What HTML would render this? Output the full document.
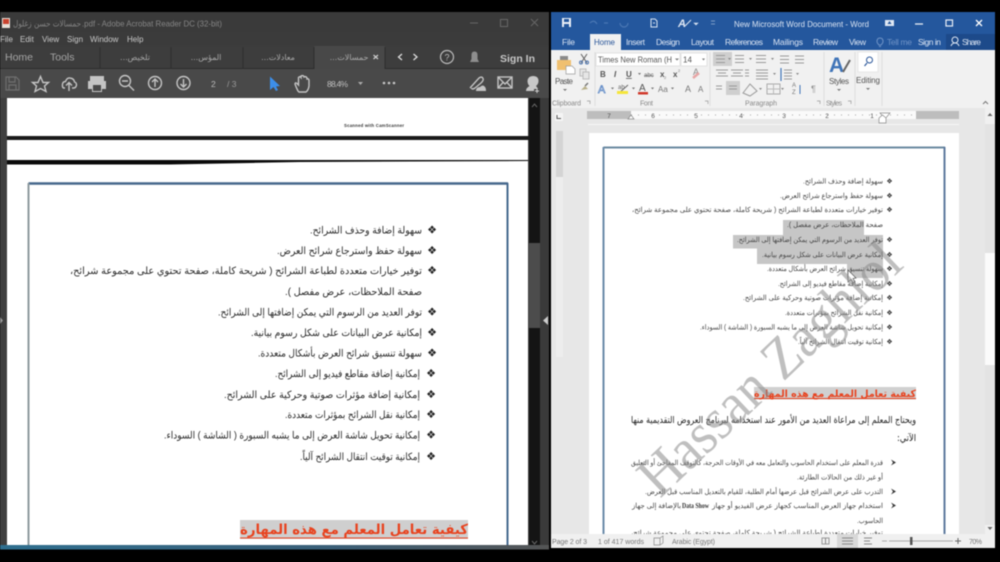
<!DOCTYPE html>
<html lang="en"><head><meta charset="utf-8"><title>Screen</title>
<style>
html,body{margin:0;padding:0;background:#000;width:1000px;height:562px;overflow:hidden}
svg{display:block;filter:blur(.55px)}
text{font-family:"Liberation Sans",sans-serif}
.ar{font-family:"DejaVu Sans","Liberation Sans",sans-serif;direction:rtl;text-anchor:start;fill:#2a2a2a;font-size:10px}
.ars{font-size:7px;fill:#444}
.dj{font-family:"DejaVu Sans",sans-serif}
.tab{font-family:"DejaVu Sans",sans-serif;direction:rtl;text-anchor:middle;font-size:8px;fill:#a8a8a8}
.ic{fill:none;stroke:#c4c4c4;stroke-width:1.4}
.mn{font-size:8px;fill:#c8c8c8}
.tb{font-size:8.5px;fill:#d9e3f2}
.rb{font-size:8px;fill:#555}
.gl{font-size:7px;fill:#8a8a8a}
</style></head><body>
<svg width="1000" height="562" viewBox="0 0 1000 562" xmlns="http://www.w3.org/2000/svg">
<rect width="1000" height="562" fill="#000"/>

<!-- LEFT: Acrobat chrome -->
<rect x="0" y="12" width="549" height="20" fill="#3a3a3a"/>
<rect x="0" y="32" width="549" height="14" fill="#3b3b3b"/>
<rect x="0" y="46" width="549" height="23" fill="#3d3d3d"/>
<rect x="314" y="46" width="71" height="23" fill="#484848"/>
<rect x="0" y="69" width="549" height="30" fill="#494949"/>
<rect x="0" y="68" width="314" height="1" fill="#2c2c2c"/><rect x="385" y="68" width="164" height="1" fill="#2c2c2c"/>
<path d="M100 47V69M171 47V69M243 47V69M314 47V69M385 47V69" stroke="#2e2e2e"/>
<rect x="2" y="18" width="8" height="10" fill="#e9e0d8"/><rect x="3" y="19" width="6" height="5" fill="#c9432f"/>
<text class="ar" x="81" y="26.500" textLength="68" lengthAdjust="spacingAndGlyphs" style="font-size:8.500px;fill:#858585">حمسالات حسن زغلول</text>
<text x="82" y="26.500" font-size="8.500" fill="#858585" textLength="140" lengthAdjust="spacingAndGlyphs">.pdf - Adobe Acrobat Reader DC (32-bit)</text>
<path d="M470 23H478" stroke="#666"/><rect x="500.500" y="19.500" width="7" height="7" fill="none" stroke="#666"/><path d="M531 19L538 26M538 19L531 26" stroke="#666"/>
<g class="mn"><text x="0" y="42">File</text><text x="20" y="42">Edit</text><text x="42" y="42">View</text><text x="67" y="42">Sign</text><text x="90" y="42">Window</text><text x="127" y="42">Help</text></g>
<text x="5" y="60.500" font-size="10.500" fill="#a5a5a5">Home</text><text x="50" y="60.500" font-size="10.500" fill="#a5a5a5">Tools</text>
<text class="tab" x="135" y="60">تلخيص...</text><text class="tab" x="206" y="60">المؤس...</text><text class="tab" x="278" y="60">معادلات...</text><text class="tab" x="349" y="60">حمسالات...</text>
<g transform="translate(0,-3)">
<path d="M373.500 58L378 62M378 58L373.500 62" stroke="#ccc" stroke-width="1.200"/>
<path d="M402 57L398.500 60L402 63M413.500 57L417 60L413.500 63" fill="none" stroke="#ddd" stroke-width="1.300"/>
<circle cx="447" cy="60" r="6.500" fill="none" stroke="#bbb" stroke-width="1.200"/><text x="447" y="63.500" font-size="9" fill="#bbb" text-anchor="middle">?</text>
<path d="M470 65H479L477.500 62V58Q477.500 54.500 474.500 54.500Q471.500 54.500 471.500 58V62Z" fill="#8e8e8e"/>
<text x="500" y="65" font-size="10.500" font-weight="bold" fill="#c6c6c6" textLength="35">Sign In</text>
</g>

<!-- toolbar icons -->
<g transform="translate(0,-4)">
<g fill="none" stroke="#6f6f6f" stroke-width="1.200"><path d="M6 81H16L19 84V94H6Z M9 81V86H15V81M9 94V89H16V94"/></g>
<path class="ic" d="M40.500 80.500L43 86.500H48.500L44.500 90L46 95.500L40.500 92.500L35 95.500L36.500 90L32.500 86.500H38Z"/>
<path class="ic" d="M65 92H64Q62 92 62.500 88Q63 85.500 65.500 85.500Q67 81.500 70 82Q74 82.500 74.500 86Q76.500 86.500 76.500 89Q76 92 73.500 92H72M69 95V87M66 89.500L69 86.500L72 89.500"/>
<path d="M90 85V80H104V85H106V93H102V96H92V93H88V85Z M93 89H101V95H93Z" fill="#c4c4c4" fill-rule="evenodd"/>
<circle cx="125" cy="85" r="5.500" class="ic"/><path class="ic" d="M129 89.500L134 94.500M122 85H128"/>
<circle cx="155" cy="87" r="6.500" class="ic"/><path class="ic" d="M155 91V83.500M152 86L155 83L158 86"/>
<circle cx="183.500" cy="87" r="6.500" class="ic"/><path class="ic" d="M183.500 83V90.500M180.500 88L183.500 91L186.500 88"/>
<text x="211" y="91" font-size="8.500" fill="#bbb">2</text><text x="227" y="91" font-size="8.500" fill="#999">/ 3</text>
<path d="M270 80.500L270 94L273.500 91L276 95L278 94L276 90.500L280 90Z" fill="#3d8ee8"/>
<path class="ic" d="M298 95Q296 91 295 88Q295 86 297 87.500L298.500 89V81.500Q300 80 301 81.500V80Q303 79 304 80.500V81Q306 80 307 82V83Q308.500 82.500 309 84V90Q308.500 94 306 96H299Z"/>
<text x="327" y="91" font-size="8.500" fill="#bfbfbf" textLength="21">88.4%</text>
<path d="M358 86H363L360.500 89Z" fill="#aaa"/>
<g fill="#c6c6c6"><circle cx="384" cy="87" r="1.300"/><circle cx="389" cy="87" r="1.300"/><circle cx="394" cy="87" r="1.300"/></g>
<path class="ic" d="M470 92L479 82Q482 80 483 82.500Q484 84 481 87L475 92Q472 94 471.500 92"/><path d="M476 95Q476 91 480 91Q483 88 485 91Q486 92 486 95Z" fill="#c4c4c4"/>
<rect x="498" y="81" width="14" height="11" class="ic"/><path class="ic" d="M498 81L505 88L512 81M498 92L503 86.500M512 92L507 86.500"/>
<path d="M533 80Q528 80 527.500 85Q527.500 88 529.500 90Q526 92 526 95H534V93H538Q537 91 536 90Q538.500 88 538.500 85Q538.500 80 533 80Z" fill="#c8c8c8"/><path d="M537 93V97M535 95H539" stroke="#ccc"/>
</g>

<!-- LEFT: document area -->
<rect x="0" y="98" width="530" height="448" fill="#3f3f3f"/>
<rect x="529" y="98" width="11" height="448" fill="#141414"/>
<rect x="540" y="98" width="9" height="448" fill="#3a3a3a"/>
<rect x="529" y="243" width="11" height="85" fill="#4c4c4c"/>
<path d="M532 107L534.500 104L537 107M532 541L534.500 544L537 541" fill="none" stroke="#666"/>
<path d="M548 316L543 320.500L548 325Z" fill="#ccc"/>
<path d="M0 317L3 320.500L0 324Z" fill="#999"/>
<rect x="7" y="98" width="521" height="38" fill="#fff"/>
<rect x="7" y="136" width="523" height="4" fill="#1a1a1a"/>
<rect x="7" y="140" width="521" height="20" fill="#fff"/>
<rect x="7" y="160" width="521" height="385" fill="#fff"/>
<path d="M7 160H528V161L300 162L170 164.500H7Z" fill="#0a0a0a"/>
<text x="344" y="127" font-size="4.300" font-weight="bold" fill="#333" textLength="60">Scanned with CamScanner</text>
<!-- frame -->
<path d="M28.500 183.500H508" stroke="#46688c" stroke-width="2.500"/>
<path d="M28.500 183V545" stroke="#8e9a9e" stroke-width="2"/>
<path d="M507.500 183V545" stroke="#44688e" stroke-width="2"/>

<g class="ar">
<text x="422" y="233.500" textLength="112" lengthAdjust="spacingAndGlyphs">سهولة إضافة وحذف الشرائح.</text>
<text x="422" y="254" textLength="145" lengthAdjust="spacingAndGlyphs">سهولة حفظ واسترجاع شرائح العرض.</text>
<text x="422" y="274" textLength="352" lengthAdjust="spacingAndGlyphs">توفير خيارات متعددة لطباعة الشرائح ( شريحة كاملة، صفحة تحتوي على مجموعة شرائح،</text>
<text x="422" y="295" textLength="137" lengthAdjust="spacingAndGlyphs">صفحة الملاحظات، عرض مفصل ).</text>
<text x="422" y="315.500" textLength="204" lengthAdjust="spacingAndGlyphs">توفر العديد من الرسوم التي يمكن إضافتها إلى الشرائح.</text>
<text x="422" y="336" textLength="171" lengthAdjust="spacingAndGlyphs">إمكانية عرض البيانات على شكل رسوم بيانية.</text>
<text x="422" y="356.500" textLength="164" lengthAdjust="spacingAndGlyphs">سهولة تنسيق شرائح العرض بأشكال متعددة.</text>
<text x="420" y="377" textLength="145" lengthAdjust="spacingAndGlyphs">إمكانية إضافة مقاطع فيديو إلى الشرائح.</text>
<text x="420" y="398" textLength="196" lengthAdjust="spacingAndGlyphs">إمكانية إضافة مؤثرات صوتية وحركية على الشرائح.</text>
<text x="420" y="418" textLength="135" lengthAdjust="spacingAndGlyphs">إمكانية نقل الشرائح بمؤثرات متعددة.</text>
<text x="420" y="438.500" textLength="256" lengthAdjust="spacingAndGlyphs">إمكانية تحويل شاشة العرض إلى ما يشبه السبورة ( الشاشة ) السوداء.</text>
<text x="420" y="460" textLength="120" lengthAdjust="spacingAndGlyphs">إمكانية توقيت انتقال الشرائح آلياً.</text>
</g>
<g class="dj" font-size="11" fill="#222" text-anchor="middle">
<text class="dj" x="432" y="233.500">❖</text><text class="dj" x="432" y="254">❖</text><text class="dj" x="432" y="274">❖</text><text class="dj" x="432" y="315.500">❖</text><text class="dj" x="432" y="336">❖</text><text class="dj" x="432" y="356.500">❖</text><text class="dj" x="431" y="377">❖</text><text class="dj" x="431" y="398">❖</text><text class="dj" x="431" y="418">❖</text><text class="dj" x="431" y="438.500">❖</text><text class="dj" x="431" y="460">❖</text></g>
<rect x="240" y="520" width="228" height="19" fill="#cfcfcf"/>
<text class="ar" x="468" y="534" textLength="228" lengthAdjust="spacingAndGlyphs" style="fill:#e8431f;font-size:14px;font-weight:bold">كيفية تعامل المعلم مع هذه المهارة</text>
<rect x="240" y="537.500" width="228" height="1" fill="#e8431f"/>
<defs><linearGradient id="bl" x1="0" x2="1"><stop offset="0" stop-color="#2f6f8f"/><stop offset=".6" stop-color="#3a5f78"/><stop offset="1" stop-color="#555"/></linearGradient></defs>
<rect x="0" y="545" width="549" height="4.500" fill="url(#bl)"/>

<!-- RIGHT: Word chrome -->
<rect x="551" y="12" width="444" height="38" fill="#24579d"/>
<rect x="946" y="34" width="49" height="16" fill="#1d4a8a"/>
<path d="M562 18H571V27H562Z" fill="#e8eef6"/><rect x="564" y="19" width="5" height="3" fill="#24579d"/><rect x="564" y="24" width="5" height="3" fill="#24579d"/>
<path d="M590 23Q594 19 597 24M604 23H608M620 23A4 4 0 1 0 628 23" fill="none" stroke="#4a77b4" stroke-width="1.200"/>
<path d="M651 19H655L657 21V27H651Z M653 23H655" fill="none" stroke="#d8e3f2"/>
<text x="678" y="27" font-size="11" font-weight="bold" font-style="italic" fill="#e0e8f4">A</text><path d="M685 26L691 20" stroke="#e0e8f4"/>
<path d="M694 23H698L696 25Z M711 21H715M711 24H715" fill="#d8e3f2" stroke="#d8e3f2" stroke-width=".6"/>
<text x="734" y="27" class="tb" textLength="135" lengthAdjust="spacingAndGlyphs">New Microsoft Word Document - Word</text>
<rect x="885" y="20" width="9" height="6" fill="#e0e8f4"/><path d="M889.500 21L887.500 24H891.500Z" fill="#24579d"/>
<path d="M915 24H923" stroke="#e8eef6" stroke-width="1.300"/><rect x="946" y="20" width="6.500" height="6" fill="none" stroke="#e8eef6" stroke-width="1.200"/><path d="M976 20L982 26M982 20L976 26" stroke="#fff" stroke-width="1.300"/>
<rect x="590" y="34" width="31" height="16" fill="#f1f1f1"/>
<g class="tb" font-size="8"><text x="562" y="45" textLength="13">File</text></g>
<text x="594" y="45" font-size="8" fill="#2b579a" textLength="21">Home</text>
<g class="tb"><text x="626" y="45" textLength="19">Insert</text><text x="656" y="45" textLength="24">Design</text><text x="691" y="45" textLength="23">Layout</text><text x="725" y="45" textLength="38">References</text><text x="773" y="45" textLength="30">Mailings</text><text x="813" y="45" textLength="25">Review</text><text x="849" y="45" textLength="17">View</text><text x="887" y="45" textLength="25" style="fill:#6f93c6">Tell me</text><text x="918" y="45" textLength="23">Sign in</text><text x="962" y="45" textLength="19">Share</text></g>
<path d="M880 38Q877 38 877 41.500Q877 43 879 45H881Q883 43 883 41.500Q883 38 880 38Z M879 46.500H881" fill="none" stroke="#6f93c6"/>
<circle cx="955" cy="40" r="3" fill="none" stroke="#e0e8f4"/><path d="M951 46Q952 43 955 43Q958 43 959 46" fill="none" stroke="#e0e8f4"/>

<!-- ribbon -->
<rect x="551" y="50" width="444" height="58" fill="#f1f1f1"/>
<rect x="551" y="108" width="444" height="426" fill="#e7e7e7"/>
<path d="M595 52V106M710 52V106M824 52V106M855 52V106M882 52V106" stroke="#dcdcdc"/>
<path d="M557 60H571V73H567V70H557Z" fill="#f0c070"/><rect x="560" y="56" width="8" height="4" fill="#8a8a8a"/><path d="M566 66H572L575 69V74H566Z" fill="#fff" stroke="#9a9a9a" stroke-width=".7"/>
<text x="555" y="84" class="rb" textLength="18">Paste</text><path d="M563 89H567L565 91Z" fill="#777"/>
<path d="M581 54L587 63M587 54L581 63" stroke="#666" stroke-width="1.100"/><circle cx="581" cy="62.500" r="1.500" fill="none" stroke="#4f76b0"/><circle cx="587" cy="62.500" r="1.500" fill="none" stroke="#4f76b0"/>
<rect x="580" y="69" width="6" height="7" fill="#e6e6e6" stroke="#bbb"/><rect x="583" y="72" width="6" height="7" fill="#e6e6e6" stroke="#bbb"/>
<path d="M581 90L585 86L588 89Z" fill="#b8b08a"/><path d="M585 86L588 83" stroke="#777" stroke-width="1.500"/>
<rect x="596" y="53" width="84" height="13" fill="#fff" stroke="#e2e2e2"/><rect x="681" y="53" width="26" height="13" fill="#fff" stroke="#e2e2e2"/>
<text x="598" y="62.500" font-size="8" fill="#555" textLength="74" lengthAdjust="spacingAndGlyphs">Times New Roman (H</text><path d="M675 58.500H679L677 60.500Z M702 58.500H705L703.500 60.500Z" fill="#777"/>
<text x="683" y="62.500" font-size="8" fill="#555">14</text>
<text x="600" y="77" font-size="8" font-weight="bold" fill="#555">B</text><text x="614" y="77" font-size="8" font-style="italic" font-weight="bold" fill="#555">I</text><text x="626" y="77" font-size="8" font-weight="bold" fill="#555" text-decoration="underline">U</text>
<path d="M638 73H641L639.500 75Z" fill="#777"/>
<text x="644" y="77" font-size="6" fill="#666" text-decoration="line-through">abc</text>
<text x="660" y="77" font-size="8" font-weight="bold" fill="#555">x</text><text x="664" y="79" font-size="4" fill="#777">2</text>
<text x="673" y="77" font-size="8" font-weight="bold" fill="#555">x</text><text x="678" y="72" font-size="4" fill="#777">2</text>
<text x="693" y="75" font-size="9" fill="#888">A</text><path d="M693 78L699 73" stroke="#e7a6a6" stroke-width="2.500"/>
<text x="598" y="93" font-size="11" fill="#fff" stroke="#5b86c4" stroke-width=".7">A</text><path d="M611 87.500H614L612.500 89.500Z" fill="#777"/>
<text x="618" y="89" font-size="6" fill="#666">ab</text><path d="M619 93L628 85" stroke="#666"/><rect x="617" y="91" width="11" height="3" fill="#f5e63a"/><path d="M632 87.500H635L633.500 89.500Z" fill="#777"/>
<text x="639" y="91" font-size="10" fill="#555">A</text><rect x="638" y="92" width="10" height="2.500" fill="#d0392b"/><path d="M651 87.500H654L652.500 89.500Z" fill="#777"/>
<text x="658" y="92" font-size="8" fill="#777">Aa</text><path d="M671 87.500H674L672.500 89.500Z" fill="#777"/>
<text x="685" y="92" font-size="9" fill="#777">A</text><text x="698" y="92" font-size="8" fill="#777">A</text>
<rect x="713" y="52" width="19" height="14" fill="#cfcfcf"/>
<rect x="726" y="81" width="14" height="14" fill="#cfcfcf"/>
<g stroke="#9a9a9a" fill="none">
<path d="M716 55.500H725M716 59H725M716 62.500H725M735 55.500H744M735 59H744M735 62.500H744M756 55.500H766M756 59H766M756 62.500H766M780 56H789M780 59.500H789M780 63H789M795 56H804M795 59.500H804M795 63H804"/>
<path d="M716 70H728M718 73H726M716 76H728M731 70H743M733 73H741M731 76H743M745 70H749M745 73H749M745 76H749M756 70H768M756 73H768M756 76H768M756 79H768M784 70H792M784 73H792M784 76H792M784 79H792"/>
<path d="M716 86H722M716 89H722M729 86H737M729 89H737"/>
</g>
<path d="M781 68V81" stroke="#3f74b8" stroke-width="1.200"/>
<path d="M743 93L750 84L757 91L750 96Z" fill="none" stroke="#9a9a9a"/>
<rect x="767" y="84" width="13" height="10" fill="none" stroke="#aaa"/><path d="M767 89H780M773.500 84V94" stroke="#bbb"/>
<text x="792" y="87" font-size="6" fill="#777">A</text><text x="792" y="94" font-size="6" fill="#777">Z</text><path d="M800 85V94" stroke="#3f74b8"/>
<text x="811" y="92" font-size="9" fill="#999">¶</text>
<path d="M728 58H731L729.500 60Z M749 58H752L750.500 60Z M771 58H774L772.500 60Z M773 73H776L774.500 75Z M796 73H799L797.500 75Z M759 88H762L760.500 90Z M781 88H784L782.500 90Z" fill="#888"/>
<text x="829" y="72" font-size="21" font-weight="bold" fill="#3f74b8">A</text><path d="M843 72L850 60" stroke="#666" stroke-width="2"/>
<text x="829" y="84" class="rb" textLength="20">Styles</text><path d="M837 89H841L839 91Z" fill="#777"/>
<rect x="858" y="52" width="20" height="20" fill="#fff" stroke="#e7e7e7"/><circle cx="869.500" cy="60" r="3" fill="none" stroke="#2b579a"/><path d="M867 63L864.500 66" stroke="#2b579a" stroke-width="1.200"/>
<text x="856" y="83" class="rb" textLength="24">Editing</text><path d="M866 88H870L868 90Z" fill="#777"/>
<g class="gl"><text x="552" y="105.500" textLength="29">Clipboard</text><text x="640" y="105.500" textLength="13">Font</text><text x="745" y="105.500" textLength="32">Paragraph</text><text x="826" y="105.500" textLength="16">Styles</text></g>
<path d="M587 101H590V104M705 101H708V104M817 101H820V104M848 101H851V104" fill="none" stroke="#999" stroke-width=".7"/>
<path d="M983 104L985.500 101.500L988 104" fill="none" stroke="#777"/>

<!-- ruler -->
<rect x="555" y="113" width="8" height="8" fill="#f4f4f4"/><path d="M557 115V118.500H561" fill="none" stroke="#555"/>
<rect x="587" y="111" width="44" height="8" fill="#bdbdbd"/>
<rect x="631" y="111" width="285" height="8" fill="#fafafa"/>
<rect x="916" y="111" width="43" height="8" fill="#bdbdbd"/>
<rect x="588" y="124" width="371" height="1" fill="#f7f7f7"/>
<g font-size="6.500" fill="#555" text-anchor="middle"><text x="609" y="118">7</text><text x="653" y="118">6</text><text x="696" y="118">5</text><text x="741" y="118">4</text><text x="784" y="118">3</text><text x="827" y="118">2</text><text x="872" y="118">1</text></g>
<path d="M631 115H916" stroke="#aaa" stroke-dasharray="1 6" fill="none"/>
<path d="M628 119L631 115L634 119Z M880 113H890L885 119Z" fill="#fff" stroke="#888" stroke-width=".7"/><path d="M879 118L882.500 115L886 118V123H879Z" fill="#fff" stroke="#888" stroke-width=".7"/>
<rect x="556" y="131" width="7" height="46" fill="#d4d4d4"/>
<rect x="556" y="177" width="7" height="180" fill="#ededed"/>
<!-- scrollbar -->
<rect x="985" y="108" width="10" height="426" fill="#f0f0f0"/>
<rect x="985" y="124" width="10" height="129" fill="#e3e3e3"/>
<rect x="985" y="253" width="10" height="112" fill="#fbfbfb"/>
<rect x="985" y="365" width="10" height="160" fill="#e3e3e3"/>
<path d="M987.500 116L990 113L992.500 116Z M987.500 527L990 530L992.500 527Z" fill="#666"/>
<!-- page -->
<rect x="589" y="133" width="370" height="401" fill="#fff"/>
<path d="M603.500 147.500H945" stroke="#6b8aa0" stroke-width="2"/>
<path d="M603.500 147V534" stroke="#6a8aa8" stroke-width="2"/>
<path d="M944.500 147V534" stroke="#5e7a9e" stroke-width="2"/>
<!-- selection -->
<g fill="#c6c6c6"><rect x="783" y="220" width="81" height="15"/><rect x="733" y="235" width="150" height="13.500"/><rect x="757" y="248.500" width="126" height="15.500"/><rect x="847" y="264" width="36" height="14"/></g>
<g class="ar ars">
<text x="883" y="183.500" textLength="80" lengthAdjust="spacingAndGlyphs">سهولة إضافة وحذف الشرائح.</text>
<text x="883" y="198" textLength="103" lengthAdjust="spacingAndGlyphs">سهولة حفظ واسترجاع شرائح العرض.</text>
<text x="883" y="212" textLength="251" lengthAdjust="spacingAndGlyphs">توفير خيارات متعددة لطباعة الشرائح ( شريحة كاملة، صفحة تحتوي على مجموعة شرائح،</text>
<text x="883" y="227" textLength="96" lengthAdjust="spacingAndGlyphs">صفحة الملاحظات، عرض مفصل ).</text>
<text x="883" y="242" textLength="146" lengthAdjust="spacingAndGlyphs">توفر العديد من الرسوم التي يمكن إضافتها إلى الشرائح.</text>
<text x="883" y="257" textLength="121" lengthAdjust="spacingAndGlyphs">إمكانية عرض البيانات على شكل رسوم بيانية.</text>
<text x="883" y="271" textLength="116" lengthAdjust="spacingAndGlyphs">سهولة تنسيق شرائح العرض بأشكال متعددة.</text>
<text x="883" y="286" textLength="105" lengthAdjust="spacingAndGlyphs">إمكانية إضافة مقاطع فيديو إلى الشرائح.</text>
<text x="883" y="300" textLength="140" lengthAdjust="spacingAndGlyphs">إمكانية إضافة مؤثرات صوتية وحركية على الشرائح.</text>
<text x="883" y="315" textLength="98" lengthAdjust="spacingAndGlyphs">إمكانية نقل الشرائح بمؤثرات متعددة.</text>
<text x="883" y="329.500" textLength="183" lengthAdjust="spacingAndGlyphs">إمكانية تحويل شاشة العرض إلى ما يشبه السبورة ( الشاشة ) السوداء.</text>
<text x="883" y="344" textLength="85" lengthAdjust="spacingAndGlyphs">إمكانية توقيت انتقال الشرائح آلياً.</text>
<text x="883" y="465" textLength="252" lengthAdjust="spacingAndGlyphs">قدرة المعلم على استخدام الحاسوب والتعامل معه في الأوقات الحرجة، كالتوقف المفاجئ أو التعليق</text>
<text x="883" y="479.500" textLength="86" lengthAdjust="spacingAndGlyphs">أو غير ذلك من الحالات الطارئة.</text>
<text x="883" y="494" textLength="238" lengthAdjust="spacingAndGlyphs">التدرب على عرض الشرائح قبل عرضها أمام الطلبة، للقيام بالتعديل المناسب قبل العرض.</text>
<text x="883" y="508" textLength="171" lengthAdjust="spacingAndGlyphs">استخدام جهاز العرض المناسب كجهاز عرض الفيديو أو جهاز</text>
<text x="681" y="508" textLength="49" lengthAdjust="spacingAndGlyphs">بالإضافة إلى جهاز</text>
<text x="883" y="523" textLength="26" lengthAdjust="spacingAndGlyphs">الحاسوب.</text>
<text x="883" y="535" textLength="252" lengthAdjust="spacingAndGlyphs">توفير خيارات متعددة لطباعة الشرائح ( شريحة كاملة، صفحة تحتوي على مجموعة شرائح،</text>
</g>
<text x="682" y="508" font-size="7.500" fill="#333" style="font-family:'Liberation Serif',serif" font-weight="bold" textLength="27" lengthAdjust="spacingAndGlyphs">Data Show</text>
<g class="dj" font-size="7" fill="#333" text-anchor="middle"><text class="dj" x="889.500" y="183.500">❖</text><text class="dj" x="889.500" y="198">❖</text><text class="dj" x="889.500" y="212">❖</text><text class="dj" x="889.500" y="242">❖</text><text class="dj" x="889.500" y="257">❖</text><text class="dj" x="889.500" y="271">❖</text><text class="dj" x="889.500" y="286">❖</text><text class="dj" x="889.500" y="300">❖</text><text class="dj" x="889.500" y="315">❖</text><text class="dj" x="889.500" y="329.500">❖</text><text class="dj" x="889.500" y="344">❖</text></g>
<path d="M891 459.500L896 462.500L891 465.500L893 462.500ZM891 488.500L896 491.500L891 494.500L893 491.500ZM891 502.500L896 505.500L891 508.500L893 505.500Z" fill="#333"/>
<rect x="754" y="387" width="162" height="12.500" fill="#d0d0d0"/>
<text class="ar" x="916" y="397" textLength="162" lengthAdjust="spacingAndGlyphs" style="fill:#e8431f;font-size:10px;font-weight:bold">كيفية تعامل المعلم مع هذه المهارة</text>
<rect x="754" y="398" width="162" height="1" fill="#e8431f"/>
<text class="ar" x="916" y="423" textLength="285" lengthAdjust="spacingAndGlyphs" style="font-size:9.500px;fill:#222">ويحتاج المعلم إلى مراعاة العديد من الأمور عند استخدامه لبرنامج العروض التقديمية منها</text>
<text class="ar" x="916" y="441" textLength="19" lengthAdjust="spacingAndGlyphs" style="font-size:9.500px;fill:#222">الآتي:</text>
<!-- cursor -->
<path d="M848 270V282L851 279.500L853 283L855 282L853 278.500L856 278Z" fill="#fff" stroke="#555" stroke-width=".7"/>
<!-- watermark -->
<text transform="translate(660 499) rotate(-43.500)" x="0" y="0" font-size="58" fill="#8a8a8a" fill-opacity=".55" textLength="338" lengthAdjust="spacingAndGlyphs" style="font-family:'Liberation Serif',serif">Hassan Zaghlol</text>
<!-- status bar -->
<rect x="551" y="534" width="444" height="14" fill="#f0f0f0"/>
<rect x="837" y="534" width="21" height="14" fill="#d8d8d8"/>
<g class="rb" style="fill:#777"><text x="552" y="544" textLength="35" font-size="7">Page 2 of 3</text><text x="598" y="544" textLength="46" font-size="7">1 of 417 words</text><text x="672" y="544" textLength="43" font-size="7">Arabic (Egypt)</text></g>
<path d="M654 538H660V545H654ZM660 538L663 536V543L660 545" fill="none" stroke="#888" stroke-width=".7"/>
<rect x="822" y="538" width="7" height="6" fill="none" stroke="#999"/><path d="M825.500 538V544M842 538H853M842 541H853M842 544H853M864 538H872M864 541H870M864 544H872" stroke="#888" fill="none"/>
<path d="M882 541H887M889 541H953" stroke="#aaa"/><rect x="910" y="537" width="2.500" height="8" fill="#555"/>
<path d="M955 541H961M958 538V544" stroke="#666"/>
<text x="969" y="544" font-size="7" fill="#777" textLength="13">70%</text>
</svg>
</body></html>
